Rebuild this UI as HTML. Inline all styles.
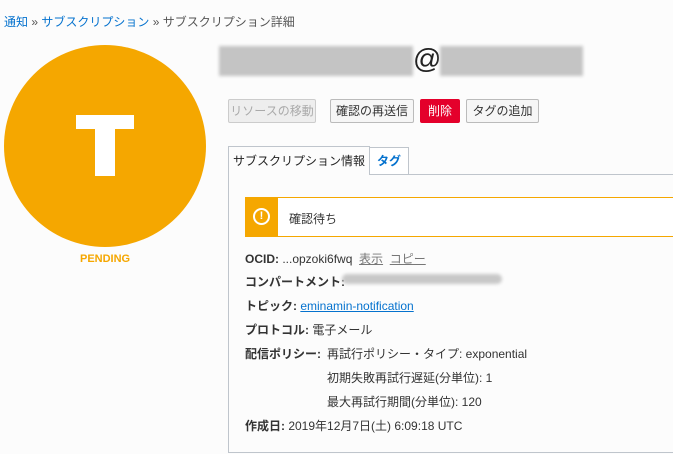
<!DOCTYPE html>
<html><head><meta charset="utf-8"><style>
*{margin:0;padding:0;box-sizing:border-box}
body{width:673px;height:454px;background:#fcfcfc;font-family:"Liberation Sans","Noto Sans CJK JP",sans-serif;font-size:12px;color:#333;position:relative;overflow:hidden}
.a{position:absolute}
.bc{left:4px;top:13px;font-size:12px;color:#555;white-space:nowrap}
.bc a{color:#0572ce;text-decoration:none}
.circle{left:4px;top:45px;width:202px;height:202px;border-radius:50%;background:#f5a700}
.blur{background:#c4c4c4;filter:blur(1.5px);height:30px;top:46px}
.btn{top:99px;height:24px;border:1px solid #bbb;border-radius:2px;background:#f6f6f6;font-size:12px;line-height:22px;text-align:center;color:#333}
.row{left:245px;font-size:12px;white-space:nowrap;color:#333}
.row b{font-weight:bold}
</style></head><body>
<div class="a bc"><a>通知</a> » <a>サブスクリプション</a> » サブスクリプション詳細</div>
<div class="a circle"></div>
<div class="a" style="left:76px;top:115px;width:58px;height:14px;background:#fff"></div>
<div class="a" style="left:95px;top:115px;width:20px;height:61px;background:#fff"></div>
<div class="a" style="left:80px;top:253px;font-size:11px;font-weight:bold;color:#f5a700">PENDING</div>
<div class="a blur" style="left:219px;width:194px"></div>
<div class="a" style="left:413px;top:43px;font-size:28px;color:#222">@</div>
<div class="a blur" style="left:440px;width:143px"></div>
<div class="a btn" style="left:228px;width:88px;background:#eee;color:#aaa;border-color:#ccc">リソースの移動</div>
<div class="a btn" style="left:330px;width:84px">確認の再送信</div>
<div class="a btn" style="left:420px;width:40px;background:#e4002b;border-color:#e4002b;color:#fff">削除</div>
<div class="a btn" style="left:466px;width:73px">タグの追加</div>
<div class="a" style="left:228px;top:174px;width:460px;height:279px;border:1px solid #bfc5cc;background:#fcfcfc"></div>
<div class="a" style="left:228px;top:146px;width:142px;height:29px;border:1px solid #bfc5cc;border-bottom:none;background:#fcfcfc;font-size:12px;line-height:28px;text-align:center;color:#222">サブスクリプション情報</div>
<div class="a" style="left:370px;top:147px;width:39px;height:27px;border:1px solid #bfc5cc;border-left:none;border-bottom:none;background:#fff;font-size:12px;line-height:26px;text-align:center;color:#0572ce;font-weight:bold">タグ</div>
<div class="a" style="left:245px;top:197px;width:440px;height:40px;border:1px solid #f5a700;background:#fff"></div>
<div class="a" style="left:245px;top:197px;width:33px;height:40px;background:#f5a700"></div>
<div class="a" style="left:253px;top:208px;width:17px;height:17px;border:2px solid #fff;border-radius:50%;color:#fff;font-size:11px;font-weight:bold;line-height:13px;text-align:center">!</div>
<div class="a" style="left:289px;top:210px;font-size:12px">確認待ち</div>
<div class="a row" style="top:250px"><b>OCID:</b> ...opzoki6fwq &nbsp;<span style="color:#777;text-decoration:underline">表示</span> &nbsp;<span style="color:#777;text-decoration:underline">コピー</span></div>
<div class="a row" style="top:273px"><b>コンパートメント:</b></div>
<div class="a" style="left:342px;top:274px;width:160px;height:10px;background:#c8c8c8;filter:blur(1.5px);border-radius:5px"></div>
<div class="a row" style="top:297px"><b>トピック:</b> <span style="color:#0572ce;text-decoration:underline">eminamin-notification</span></div>
<div class="a row" style="top:321px"><b>プロトコル:</b> 電子メール</div>
<div class="a row" style="top:345px"><b>配信ポリシー:</b></div>
<div class="a row" style="left:327px;top:345px">再試行ポリシー・タイプ: exponential</div>
<div class="a row" style="left:327px;top:369px">初期失敗再試行遅延(分単位): 1</div>
<div class="a row" style="left:327px;top:393px">最大再試行期間(分単位): 120</div>
<div class="a row" style="top:417px"><b>作成日:</b> 2019年12月7日(土) 6:09:18 UTC</div>
</body></html>
